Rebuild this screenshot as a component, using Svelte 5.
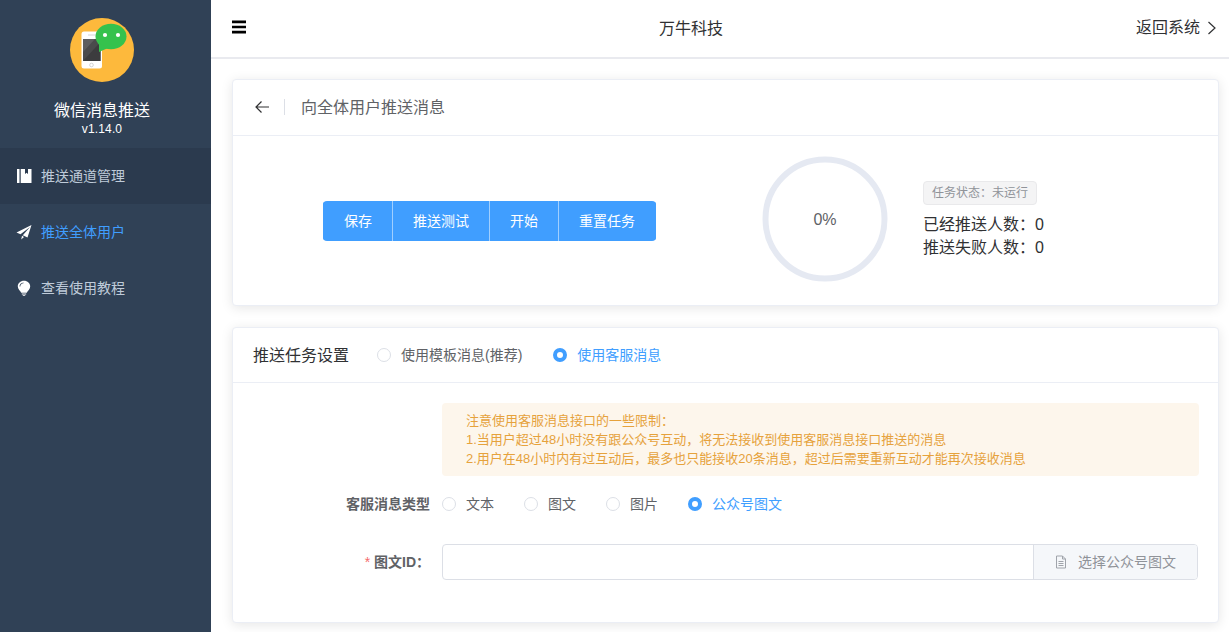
<script>
  const menu = [
    { label: '推送通道管理', icon: 'book', dark: true },
    { label: '推送全体用户', icon: 'plane', active: true },
    { label: '查看使用教程', icon: 'bulb' }
  ];
  const actions = ['保存', '推送测试', '开始', '重置任务'];
  const msgTypes = [
    { label: '文本' },
    { label: '图文' },
    { label: '图片' },
    { label: '公众号图文', on: true }
  ];
</script>

<div class="app">
  <aside class="side">
    <div class="brand">
      <svg class="logo" viewBox="0 0 64 64" width="64" height="64">
        <circle cx="32" cy="32" r="32" fill="#fdb93c" />
        <rect x="11.500" y="13.500" width="20.500" height="37" rx="2.500" fill="#fff" />
        <path d="M13 21H30.500V43H13Z" fill="#4a4a4c" />
        <path d="M13 43L30.500 24V43Z" fill="#3c3c3e" />
        <path d="M13 21H25L13 34Z" fill="#5d5d5f" />
        <path d="M18 17H26" stroke="#c9c9c9" stroke-width="0.800" />
        <circle cx="21.500" cy="47" r="1.800" fill="none" stroke="#c9c9c9" stroke-width="0.800" />
        <ellipse cx="41" cy="18.500" rx="15.500" ry="12.800" fill="#35c24d" />
        <path d="M29 25L29 34L38 30Z" fill="#35c24d" />
        <circle cx="35" cy="17" r="2.100" fill="#fff" />
        <circle cx="48" cy="17" r="2.100" fill="#fff" />
      </svg>
      <div class="brand-name">微信消息推送</div>
      <div class="brand-ver">v1.14.0</div>
    </div>
    <nav class="menu">
      {#each menu as item}
        <div class="menu-item" class:dark={item.dark} class:active={item.active}>
          <svg class="menu-icon" viewBox="0 0 16 16" width="16" height="16">
            {#if item.icon === 'book'}
              <path d="M1 1H3.500V15H1Z M4.700 1H9V6L10.500 4.800L12 6V1H15.500V15H4.700Z" fill="#fff" />
            {:else if item.icon === 'plane'}
              <path d="M15.500 1L0.500 8.500L4.500 10.300L14 3L6.800 11.300L11.500 13.500Z M6 11.800L5.200 15.500L8 13Z" fill="#fff" />
            {:else}
              <path fill-rule="evenodd" d="M8 0.800C4.400 0.800 1.800 3.300 1.800 6.500C1.800 9.300 4.300 10.700 5.200 12.800H10.800C11.700 10.700 14.200 9.300 14.200 6.500C14.200 3.300 11.600 0.800 8 0.800Z M3.500 6.500C3.500 4.300 5.200 2.600 7.500 2.400V3.200C5.700 3.400 4.300 4.800 4.300 6.500Z M5.800 13.600H10.200V14.600H5.800Z M6.800 15.200H9.200V16H6.800Z" fill="#fff" />
            {/if}
          </svg>
          <span>{item.label}</span>
        </div>
      {/each}
    </nav>
  </aside>

  <div class="main">
    <header class="top">
      <svg class="burger" viewBox="0 0 14 14" width="14" height="14">
        <path d="M0 0.500H14V3.200H0Z M0 5.700H14V8.300H0Z M0 10.800H14V13.500H0Z" fill="#000" />
      </svg>
      <div class="top-title">万牛科技</div>
      <div class="top-back">
        <span>返回系统</span>
        <svg viewBox="0 0 10 14" width="10" height="14">
          <path d="M1.500 1L8 7L1.500 13" fill="none" stroke="#303133" stroke-width="1.200" />
        </svg>
      </div>
    </header>

    <div class="content">
      <section class="card first">
        <div class="page-head">
          <svg class="back" viewBox="0 0 16 14" width="16" height="14">
            <path d="M15 7H2M7.500 1.500L2 7L7.500 12.500" fill="none" stroke="#303133" stroke-width="1.200" />
          </svg>
          <span class="divider"></span>
          <span class="page-title">向全体用户推送消息</span>
        </div>
        <div class="status-row">
          <div class="btn-cell">
            <div class="btn-group">
              {#each actions as a}
                <button type="button" class="btn">{a}</button>
              {/each}
            </div>
          </div>
          <div class="ring">
            <svg viewBox="0 0 126 126" width="126" height="126">
              <circle cx="63" cy="63" r="59.500" fill="none" stroke="#e5e9f2" stroke-width="6" />
            </svg>
            <span class="ring-text">0%</span>
          </div>
          <div class="stats">
            <span class="tag">任务状态：未运行</span>
            <div class="stat">已经推送人数：0</div>
            <div class="stat">推送失败人数：0</div>
          </div>
        </div>
      </section>

      <section class="card second">
        <div class="set-head">
          <span class="set-title">推送任务设置</span>
          <label class="radio first-radio">
            <span class="dot"></span><span class="radio-label">使用模板消息(推荐)</span>
          </label>
          <label class="radio on">
            <span class="dot"></span><span class="radio-label">使用客服消息</span>
          </label>
        </div>
        <div class="set-body">
          <div class="notice">
            <p>注意使用客服消息接口的一些限制：</p>
            <p>1.当用户超过48小时没有跟公众号互动，将无法接收到使用客服消息接口推送的消息</p>
            <p>2.用户在48小时内有过互动后，最多也只能接收20条消息，超过后需要重新互动才能再次接收消息</p>
          </div>
          <div class="form-row type-row">
            <div class="form-label">客服消息类型</div>
            <div class="type-list">
              {#each msgTypes as t}
                <label class="radio type" class:on={t.on}>
                  <span class="dot"></span><span class="radio-label">{t.label}</span>
                </label>
              {/each}
            </div>
          </div>
          <div class="form-row id-row">
            <div class="form-label"><i>*</i> 图文ID：</div>
            <div class="input-group">
              <div class="input"></div>
              <div class="append">
                <svg viewBox="0 0 12 14" width="12" height="14">
                  <path d="M1.500 1H7.500L10.500 4V13H1.500Z M7.500 1V4H10.500 M3.500 6.500H8.500 M3.500 8.500H8.500 M3.500 10.500H8.500" fill="none" stroke="#a0a4ab" stroke-width="1" />
                </svg>
                <span>选择公众号图文</span>
              </div>
            </div>
          </div>
        </div>
      </section>
    </div>
  </div>
</div>

<style>
  :global(body) {
    margin: 0;
    background: #fff;
  }
  .app {
    display: flex;
    width: 1229px;
    height: 632px;
    overflow: hidden;
    font-family: "Liberation Sans", "Noto Sans CJK SC", sans-serif;
    font-size: 14px;
    color: #303133;
  }
  .side {
    width: 211px;
    flex: none;
    background: #304156;
    color: #fff;
  }
  .brand {
    height: 148px;
    box-sizing: border-box;
    padding-top: 18px;
    display: flex;
    flex-direction: column;
    align-items: center;
  }
  .logo {
    margin-right: 7px;
  }
  .brand-name {
    margin-top: 18px;
    font-size: 16px;
    line-height: 22px;
    margin-right: 7px;
  }
  .brand-ver {
    font-size: 12px;
    line-height: 16px;
    margin-right: 7px;
    margin-top: -1px;
    letter-spacing: 0.150px;
  }
  .menu-item {
    height: 56px;
    display: flex;
    align-items: center;
    padding-left: 16px;
    gap: 9px;
    color: #bfcbd9;
    font-size: 14px;
  }
  .menu-item span {
    padding-bottom: 2px;
  }
  .menu-item.dark {
    background: #2b3a4e;
  }
  .menu-item.active {
    color: #409eff;
  }
  .menu-icon {
    flex: none;
  }
  .main {
    flex: 1;
    min-width: 0;
    display: flex;
    flex-direction: column;
  }
  .top {
    height: 59px;
    flex: none;
    box-sizing: border-box;
    border-bottom: 2px solid #e9eaef;
    display: flex;
    align-items: center;
    position: relative;
    padding: 0 12px 0 21px;
  }
  .burger {
    margin-top: -4px;
  }
  .top-title {
    position: absolute;
    left: 448px;
    top: 18px;
    font-size: 16px;
    line-height: 22px;
  }
  .top-back {
    margin-left: auto;
    display: flex;
    align-items: center;
    gap: 7px;
    font-size: 16px;
  }
  .top-back span {
    padding-bottom: 5px;
  }
  .top-back svg {
    margin-bottom: 2px;
  }
  .content {
    flex: 1;
    padding: 20px 10px 0 21px;
    display: flex;
    flex-direction: column;
    gap: 21px;
  }
  .card {
    background: #fff;
    border: 1px solid #ebeef5;
    border-radius: 4px;
    box-shadow: 0 2px 12px 0 rgba(0, 0, 0, 0.1);
    box-sizing: border-box;
  }
  .first {
    height: 227px;
  }
  .second {
    height: 296px;
  }
  .page-head {
    height: 56px;
    box-sizing: border-box;
    border-bottom: 1px solid #ebeef5;
    display: flex;
    align-items: center;
    padding-left: 21px;
    padding-bottom: 2px;
  }
  .divider {
    width: 1px;
    height: 16px;
    background: #dcdfe6;
    margin: 0 16px 0 14px;
  }
  .page-title {
    font-size: 16px;
    color: #606266;
    padding-bottom: 2px;
  }
  .status-row {
    height: 169px;
    position: relative;
    display: flex;
    align-items: center;
  }
  .btn-cell {
    width: 529px;
    flex: none;
    display: flex;
    padding-left: 90px;
    box-sizing: border-box;
    margin-top: 1px;
  }
  .btn-group {
    display: flex;
    border-radius: 4px;
    overflow: hidden;
  }
  .btn {
    height: 40px;
    border: 0;
    border-left: 1px solid rgba(255, 255, 255, 0.5);
    padding: 0 20px 2px;
    margin: 0;
    background: #409eff;
    color: #fff;
    font: inherit;
    font-size: 14px;
  }
  .btn:first-child {
    border-left-color: #409eff;
  }
  .btn:last-child {
    border-right: 1px solid #409eff;
  }
  .ring {
    width: 126px;
    height: 126px;
    position: relative;
    flex: none;
    margin-top: -3px;
  }
  .ring svg {
    display: block;
  }
  .ring-text {
    position: absolute;
    inset: 0;
    display: flex;
    align-items: center;
    justify-content: center;
    font-size: 16px;
    color: #606266;
    padding-top: 1px;
    box-sizing: border-box;
  }
  .stats {
    margin-left: 35px;
    margin-top: -2px;
    display: flex;
    flex-direction: column;
    align-items: flex-start;
  }
  .tag {
    height: 24px;
    box-sizing: border-box;
    padding: 0 8px;
    border: 1px solid #e9e9eb;
    border-radius: 4px;
    background: #f4f4f5;
    color: #909399;
    font-size: 12px;
    line-height: 22px;
    margin-bottom: 8px;
  }
  .stat {
    font-size: 16px;
    line-height: 23px;
  }
  .set-head {
    height: 55px;
    box-sizing: border-box;
    border-bottom: 1px solid #ebeef5;
    display: flex;
    align-items: center;
    padding-left: 20px;
  }
  .set-title {
    font-size: 16px;
    margin-right: 28px;
    padding-bottom: 2px;
  }
  .radio {
    display: inline-flex;
    align-items: center;
    color: #606266;
    font-size: 14px;
    gap: 10px;
    margin-right: 31px;
  }
  .radio-label {
    padding-bottom: 2px;
  }
  .dot {
    width: 14px;
    height: 14px;
    box-sizing: border-box;
    border: 1px solid #dcdfe6;
    border-radius: 50%;
    background: #fff;
    display: block;
    flex: none;
  }
  .radio.on {
    color: #409eff;
  }
  .radio.on .dot {
    border: 4.500px solid #409eff;
  }
  .set-body {
    padding: 20px 20px 0 0;
  }
  .notice {
    margin-left: 209px;
    margin-right: -1px;
    height: 73px;
    box-sizing: border-box;
    padding: 8px 24px 0;
    border-radius: 4px;
    background: #fdf6ec;
    color: #e6a23c;
    font-size: 13px;
    line-height: 19px;
  }
  .notice p {
    margin: 0;
  }
  .form-row {
    display: flex;
    align-items: center;
  }
  .type-row {
    margin-top: 8px;
    height: 40px;
  }
  .id-row {
    margin-top: 20px;
    height: 36px;
  }
  .form-label {
    width: 197px;
    flex: none;
    text-align: right;
    font-size: 14px;
    font-weight: 700;
    color: #606266;
    margin-right: 12px;
    padding-bottom: 2px;
    box-sizing: border-box;
  }
  .form-label i {
    font-style: normal;
    font-weight: 400;
    color: #f56c6c;
  }
  .type-list {
    display: flex;
  }
  .radio.type {
    width: 82px;
    margin: 0;
  }
  .radio.type.on {
    width: auto;
  }
  .input-group {
    flex: 1;
    display: flex;
    height: 36px;
    box-sizing: border-box;
    border: 1px solid #dcdfe6;
    border-radius: 4px;
    overflow: hidden;
  }
  .input {
    flex: 1;
  }
  .append {
    width: 164px;
    box-sizing: border-box;
    border-left: 1px solid #dcdfe6;
    background: #f5f7fa;
    color: #909399;
    display: flex;
    align-items: center;
    justify-content: center;
    gap: 11px;
    font-size: 14px;
  }
  .append span {
    padding-bottom: 2px;
  }
</style>
